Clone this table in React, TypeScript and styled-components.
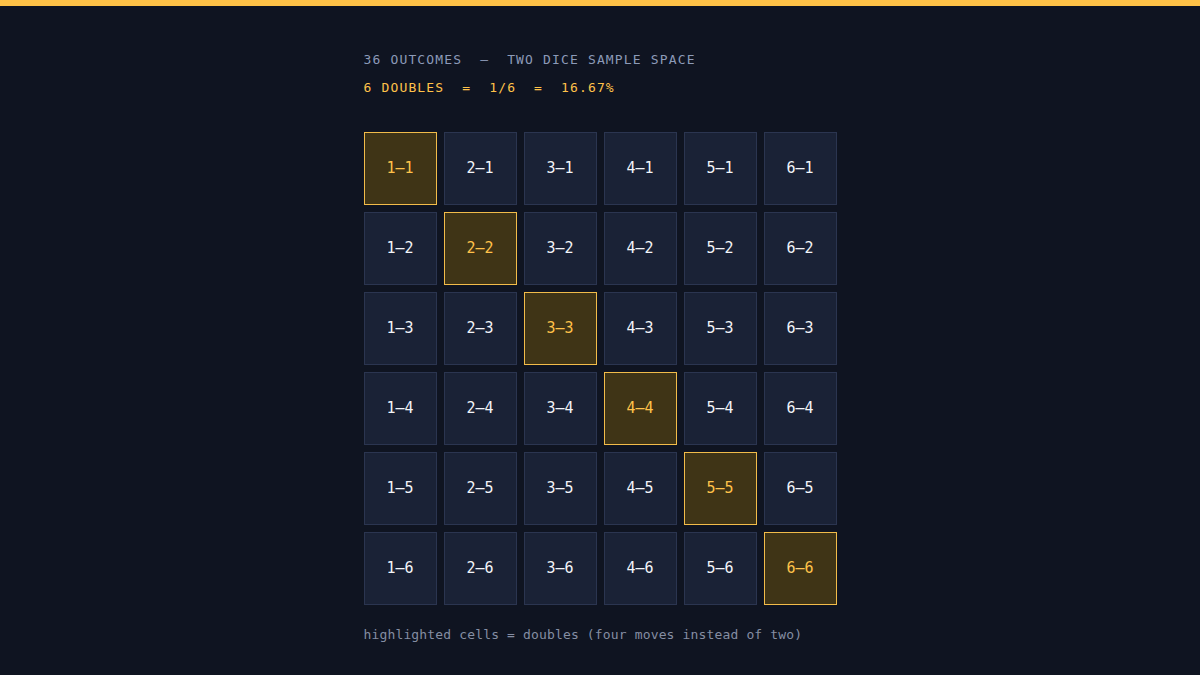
import React from "react";
import styled, { createGlobalStyle } from "styled-components";

const Global = createGlobalStyle`
  html, body { margin: 0; padding: 0; background: #0f1421; }
  body { font-family: "DejaVu Sans Mono", "Liberation Mono", monospace; }
`;

const Page = styled.div`
  width: 1200px;
  height: 675px;
  background: #0f1421;
  border-top: 6px solid #ffc247;
  box-sizing: border-box;
  display: flex;
  justify-content: center;
`;

const Column = styled.div`
  width: 473px;
  padding-top: 40px;
  display: flex;
  flex-direction: column;
`;

const Heading = styled.div<{ $accent?: boolean }>`
  font-size: 13px;
  line-height: 28px;
  letter-spacing: 1.15px;
  white-space: pre;
  color: ${(p) => (p.$accent ? "#ffc24a" : "#8c9ab8")};
  font-weight: ${(p) => (p.$accent ? 500 : 400)};
`;

const Grid = styled.div`
  margin-top: 30px;
  display: grid;
  grid-template-columns: repeat(6, 73px);
  grid-auto-rows: 73px;
  gap: 7px;
`;

const Cell = styled.div<{ $double?: boolean }>`
  box-sizing: border-box;
  display: flex;
  align-items: center;
  justify-content: center;
  padding-bottom: 2px;
  font-size: 15px;
  font-weight: 500;
  background: ${(p) => (p.$double ? "#3f3416" : "#1a2236")};
  border: 1px solid ${(p) => (p.$double ? "#f2bc4a" : "#2b3550")};
  color: ${(p) => (p.$double ? "#ffc24a" : "#f2f4f8")};
`;

const Footer = styled.div`
  margin-top: 22px;
  font-size: 13px;
  letter-spacing: 0.15px;
  color: #858ea3;
  white-space: pre;
`;

export default function App() {
  const cells: { a: number; b: number }[] = [];
  for (let b = 1; b <= 6; b++) for (let a = 1; a <= 6; a++) cells.push({ a, b });
  return (
    <>
      <Global />
      <Page>
        <Column>
          <Heading>36 OUTCOMES  —  TWO DICE SAMPLE SPACE</Heading>
          <Heading $accent>6 DOUBLES  =  1/6  =  16.67%</Heading>
          <Grid>
            {cells.map(({ a, b }) => (
              <Cell key={`${a}-${b}`} $double={a === b}>
                {a}–{b}
              </Cell>
            ))}
          </Grid>
          <Footer>highlighted cells = doubles (four moves instead of two)</Footer>
        </Column>
      </Page>
    </>
  );
}
